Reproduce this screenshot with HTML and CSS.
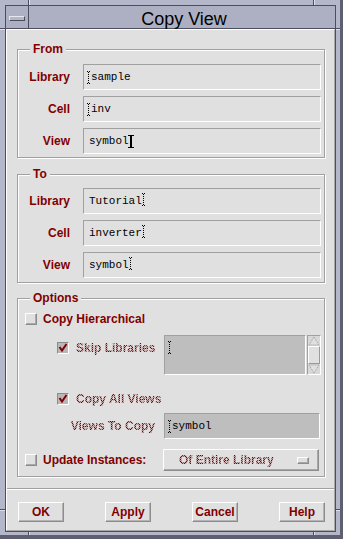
FILE: index.html
```html
<!DOCTYPE html>
<html>
<head>
<meta charset="utf-8">
<link rel="stylesheet" href="styles.css">
</head>
<body>
<div class="window">
  <div class="frame">
    <div class="titlebar">
      <div class="menu-btn"><span class="menu-bar"></span></div>
      <div class="title">Copy View</div>
    </div>
    <div class="content">
      <div class="group from">
        <span class="group-title">From</span>
        <div class="fields">
          <span class="label">Library</span>
          <div class="field"><svg class="caret pre" width="5" height="13" viewBox="0 0 5 13"><path d="M2.5 1v11" stroke="#000" stroke-dasharray="1 1"/><path d="M1 0.5h1M3 0.5h1M1 12.5h1M3 12.5h1" stroke="#000"/></svg>sample</div>
          <span class="label">Cell</span>
          <div class="field"><svg class="caret pre" width="5" height="13" viewBox="0 0 5 13"><path d="M2.5 1v11" stroke="#000" stroke-dasharray="1 1"/><path d="M1 0.5h1M3 0.5h1M1 12.5h1M3 12.5h1" stroke="#000"/></svg>inv</div>
          <span class="label">View</span>
          <div class="field">symbol<svg class="cursor" width="6" height="13" viewBox="0 0 6 13"><path d="M0 0.5h6M0 12.5h6" stroke="#000"/><rect x="2" y="0" width="2" height="13" fill="#000"/></svg></div>
        </div>
      </div>

      <div class="group to">
        <span class="group-title">To</span>
        <div class="fields">
          <span class="label">Library</span>
          <div class="field">Tutorial<svg class="caret post" width="5" height="13" viewBox="0 0 5 13"><path d="M2.5 1v11" stroke="#000" stroke-dasharray="1 1"/><path d="M1 0.5h1M3 0.5h1M1 12.5h1M3 12.5h1" stroke="#000"/></svg></div>
          <span class="label">Cell</span>
          <div class="field">inverter<svg class="caret post" width="5" height="13" viewBox="0 0 5 13"><path d="M2.5 1v11" stroke="#000" stroke-dasharray="1 1"/><path d="M1 0.5h1M3 0.5h1M1 12.5h1M3 12.5h1" stroke="#000"/></svg></div>
          <span class="label">View</span>
          <div class="field">symbol<svg class="caret post" width="5" height="13" viewBox="0 0 5 13"><path d="M2.5 1v11" stroke="#000" stroke-dasharray="1 1"/><path d="M1 0.5h1M3 0.5h1M1 12.5h1M3 12.5h1" stroke="#000"/></svg></div>
        </div>
      </div>

      <div class="group options">
        <span class="group-title">Options</span>
        <div class="opt-row row-hier">
          <span class="check"></span>
          <span class="check-label">Copy Hierarchical</span>
        </div>
        <div class="opt-row row-skip">
          <div class="skip-left">
            <span class="check dis"><svg width="10" height="10" viewBox="0 0 10 10"><path d="M1.5 4 L4 7.5 L8.5 1" stroke="#800000" stroke-width="2" fill="none"/></svg></span>
            <span class="check-label sub stipple">Skip Libraries</span>
          </div>
          <div class="listbox"><svg class="caret" width="5" height="13" viewBox="0 0 5 13"><path d="M2.5 1v11" stroke="#000" stroke-dasharray="1 1"/><path d="M1 0.5h1M3 0.5h1M1 12.5h1M3 12.5h1" stroke="#000"/></svg></div>
          <div class="scrollbar">
            <svg class="arrow" width="12" height="10" viewBox="0 0 12 10"><path d="M6 1 L11 9 H1 Z" fill="#e0e0e0" stroke="#9a9a9a" stroke-dasharray="1 1"/></svg>
            <span class="slider"></span>
            <svg class="arrow" width="12" height="10" viewBox="0 0 12 10"><path d="M6 9 L11 1 H1 Z" fill="#e0e0e0" stroke="#9a9a9a" stroke-dasharray="1 1"/></svg>
          </div>
        </div>
        <div class="opt-row row-all">
          <span class="check dis"><svg width="10" height="10" viewBox="0 0 10 10"><path d="M1.5 4 L4 7.5 L8.5 1" stroke="#800000" stroke-width="2" fill="none"/></svg></span>
          <span class="check-label sub stipple">Copy All Views</span>
        </div>
        <div class="opt-row row-views">
          <span class="views-label stipple">Views To Copy</span>
          <div class="field gray"><svg class="caret pre" width="5" height="13" viewBox="0 0 5 13"><path d="M2.5 1v11" stroke="#000" stroke-dasharray="1 1"/><path d="M1 0.5h1M3 0.5h1M1 12.5h1M3 12.5h1" stroke="#000"/></svg>symbol</div>
        </div>
        <div class="opt-row row-update">
          <div class="update-left">
            <span class="check"></span>
            <span class="check-label">Update Instances:</span>
          </div>
          <div class="optmenu">
            <span class="stipple">Of Entire Library</span>
            <span class="indicator"></span>
          </div>
        </div>
      </div>

      <div class="separator"></div>

      <div class="buttons">
        <span class="btn">OK</span>
        <span class="btn">Apply</span>
        <span class="btn">Cancel</span>
        <span class="btn">Help</span>
      </div>
    </div>
  </div>
  <span class="tick tv t-top1"></span>
  <span class="tick tv t-top2"></span>
  <span class="tick tv t-bot1"></span>
  <span class="tick tv t-bot2"></span>
  <span class="tick th t-left1"></span>
  <span class="tick th t-left2"></span>
  <span class="tick th t-right1"></span>
  <span class="tick th t-right2"></span>
</div>
</body>
</html>
```

FILE: styles.css
```css
* { box-sizing: border-box; }

body {
  margin: 0;
  font-family: "Liberation Sans", Arial, sans-serif;
  background: #b4b7ca;
}

.window {
  position: relative;
  width: 343px;
  height: 539px;
  background: #b4b7ca;
  padding: 5px 4px 3px 5px;
  border-right: 3px solid #5e6070;
  border-bottom: 4px solid #5e6070;
  display: flex;
}

.frame {
  flex: 1;
  border: 1px solid #4c4e5e;
  display: flex;
  flex-direction: column;
}

.titlebar {
  height: 23px;
  flex: none;
  border-bottom: 1px solid #4c4e5e;
  background: #adb0c3;
  display: flex;
}

.menu-btn {
  width: 23px;
  border-right: 1px solid #4c4e5e;
  display: flex;
  align-items: center;
  justify-content: center;
}

.menu-bar {
  width: 16px;
  height: 5px;
  margin-top: 2px;
  border: 1px solid;
  border-color: #e6e7ef #4c4e5e #4c4e5e #e6e7ef;
  background: #b4b7ca;
}

.title {
  flex: 1;
  text-align: center;
  font-size: 18px;
  line-height: 22px;
  padding-top: 2px;
  padding-left: 4px;
  color: #000;
}

.content {
  flex: 1;
  background: #e0e0e0;
  border: 1px solid;
  border-color: #ffffff #a8a8a8 #a8a8a8 #ffffff;
  display: flex;
  flex-direction: column;
}

.group {
  position: relative;
  margin: 0 9px 0 10px;
  border: 1px solid #a0a0a0;
  box-shadow: inset 1px 1px 0 #fff, 1px 1px 0 #fff;
}

.from { margin-top: 19px; padding: 14px 3px 3px 0; }
.to { margin-top: 16px; padding: 13px 3px 4px 0; }
.options { margin-top: 15px; padding: 0 0 5px 0; }

.group-title {
  position: absolute;
  top: -8px;
  left: 12px;
  padding: 0 3px;
  background: #e0e0e0;
  font-weight: bold;
  font-size: 12px;
  line-height: 14px;
  color: #800000;
}

.fields {
  display: grid;
  grid-template-columns: 52px 1fr;
  column-gap: 13px;
  row-gap: 6px;
  align-items: center;
}

.label {
  text-align: right;
  font-weight: bold;
  font-size: 12px;
  color: #800000;
}

.field {
  height: 26px;
  border: 1px solid;
  border-color: #a0a0a0 #fff #fff #a0a0a0;
  display: flex;
  align-items: center;
  padding-left: 5px;
  font-family: "Liberation Mono", "Courier New", monospace;
  font-size: 11px;
  color: #000;
}

.field.gray {
  width: 156px;
  background: #bebebe;
}

.caret { flex: none; display: block; }
.caret.pre { margin-left: -3px; }
.caret.post { margin-left: -1px; margin-top: -4px; }
.cursor { flex: none; display: block; margin-left: -1px; }

.opt-row {
  display: flex;
  align-items: center;
}

.row-hier { margin-top: 14px; height: 12px; padding-left: 7px; }
.row-skip { margin-top: 10px; align-items: flex-start; }
.row-all { margin-top: 18px; height: 12px; padding-left: 39px; }
.row-views { margin-top: 8px; }
.row-update { margin-top: 10px; }

.check {
  width: 12px;
  height: 12px;
  flex: none;
  border: 1px solid;
  border-color: #fff #8c8c8c #8c8c8c #fff;
  box-shadow: inset -1px -1px 0 #a8a8a8;
  background: #e0e0e0;
  display: flex;
  align-items: center;
  justify-content: center;
}

.check.dis {
  background: #b8b8b8;
  border-color: #8c8c8c #fff #fff #8c8c8c;
  box-shadow: none;
}

.check-label {
  margin-left: 6px;
  font-weight: bold;
  font-size: 12px;
  color: #800000;
  white-space: nowrap;
}

.check-label.sub { margin-left: 7px; }

.stipple {
  color: transparent;
  background-image: repeating-conic-gradient(#800000 0 25%, rgba(128, 0, 0, 0.3) 0 50%);
  background-size: 2px 2px;
  background-attachment: fixed;
  -webkit-background-clip: text;
  background-clip: text;
  font-weight: bold;
  font-size: 12px;
  white-space: nowrap;
}

.skip-left {
  width: 146px;
  flex: none;
  display: flex;
  align-items: center;
  padding-left: 39px;
  margin-top: 6px;
}

.listbox {
  width: 142px;
  height: 40px;
  flex: none;
  background: #bebebe;
  border: 1px solid;
  border-color: #a0a0a0 #fff #fff #a0a0a0;
  padding: 5px 0 0 2px;
}

.scrollbar {
  width: 14px;
  height: 40px;
  margin-left: 1px;
  flex: none;
  display: flex;
  flex-direction: column;
  align-items: center;
  border: 1px solid;
  border-color: #a0a0a0 #fff #fff #a0a0a0;
  background: #d8d8d8;
}

.arrow { display: block; flex: none; }

.slider {
  flex: 1;
  width: 12px;
  border: 1px solid;
  border-color: #fff #9a9a9a #9a9a9a #fff;
  background: #e0e0e0;
}

.views-label {
  width: 146px;
  flex: none;
  text-align: right;
  padding-right: 9px;
}

.update-left {
  width: 145px;
  flex: none;
  display: flex;
  align-items: center;
  padding-left: 7px;
}

.optmenu {
  width: 156px;
  height: 22px;
  flex: none;
  border: 1px solid;
  border-color: #fff #8c8c8c #8c8c8c #fff;
  box-shadow: inset -1px -1px 0 #a8a8a8;
  display: flex;
  align-items: center;
  padding: 0 9px 0 15px;
}

.indicator {
  margin-left: auto;
  width: 12px;
  height: 7px;
  border: 1px solid;
  border-color: #fff #8c8c8c #8c8c8c #fff;
  box-shadow: inset -1px -1px 0 #a8a8a8;
  background: #e0e0e0;
}

.separator {
  margin-top: 11px;
  height: 2px;
  flex: none;
  border-top: 1px solid #a0a0a0;
  border-bottom: 1px solid #fff;
}

.buttons {
  margin-top: 12px;
  padding: 0 9px 0 11px;
  display: flex;
  justify-content: space-between;
}

.btn {
  width: 46px;
  height: 20px;
  border: 1px solid;
  border-color: #fff #8c8c8c #8c8c8c #fff;
  box-shadow: inset -1px -1px 0 #b4b4b4;
  background: #e0e0e0;
  display: flex;
  align-items: center;
  justify-content: center;
  font-weight: bold;
  font-size: 12px;
  color: #800000;
}

.tick {
  position: absolute;
  background: #4c4e5e;
}

.tv { width: 1px; height: 5px; box-shadow: 1px 0 0 #e0e1ea; }
.th { width: 5px; height: 1px; box-shadow: 0 1px 0 #e0e1ea; }

.t-top1 { left: 28px; top: 0; }
.t-top2 { left: 313px; top: 0; }
.t-bot1 { left: 28px; top: 532px; height: 3px; }
.t-bot2 { left: 313px; top: 532px; height: 3px; }
.t-left1 { left: 0; top: 28px; }
.t-left2 { left: 0; top: 509px; }
.t-right1 { left: 336px; top: 28px; width: 4px; }
.t-right2 { left: 336px; top: 509px; width: 4px; }
```
